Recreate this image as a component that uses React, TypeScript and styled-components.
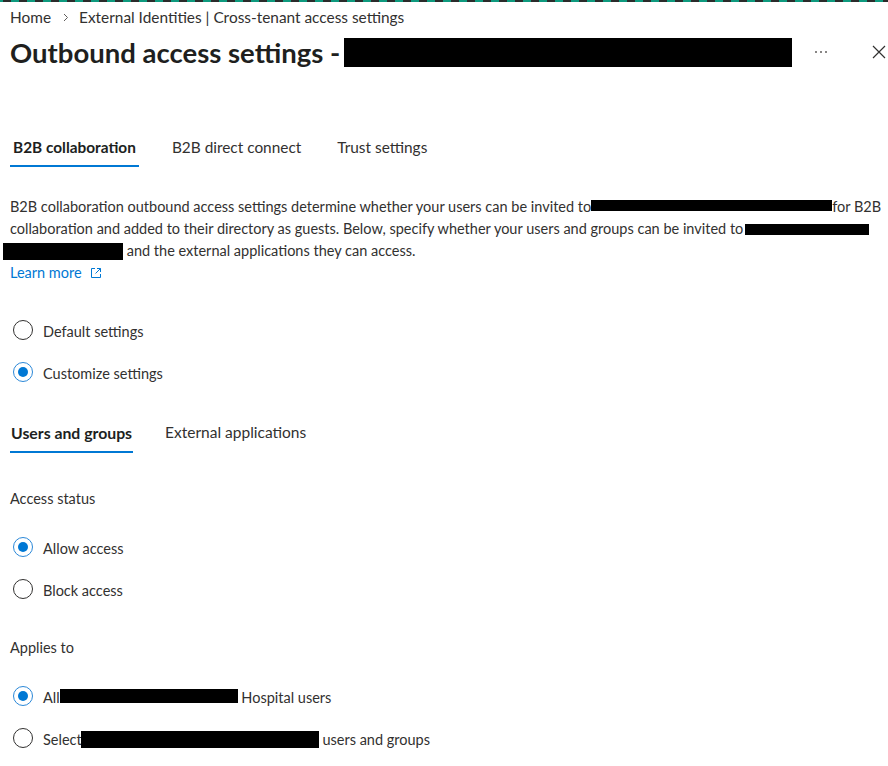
import React from "react";
import styled, { createGlobalStyle } from "styled-components";

const Global = createGlobalStyle`
  html, body { margin: 0; padding: 0; background: #ffffff; }
  body {
    font-family: Lato, "Open Sans", sans-serif;
    color: #323130;
    -webkit-font-smoothing: antialiased;
  }
`;

const Stripe = styled.div`
  height: 2px;
  background: repeating-linear-gradient(
    90deg,
    #0e9a7e 0 3px,
    #2b2b2b 3px 11px,
    #0e9a7e 11px 16px
  );
`;

const Page = styled.div`
  padding: 0 2px 0 10px;
`;

const Breadcrumb = styled.nav`
  display: flex;
  align-items: center;
  height: 20px;
  margin-top: 5px;
  font-size: 15.4px;
  color: #323130;
`;

const Crumb = styled.span`
  white-space: nowrap;
`;

const CrumbSep = styled.span`
  display: inline-flex;
  margin: 0 10px 0 12px;
  color: #605e5c;
`;

const HeaderRow = styled.div`
  display: flex;
  align-items: center;
  height: 32px;
  margin-top: 9px;
`;

const Title = styled.h1`
  margin: 0;
  font-size: 27.5px;
  font-weight: 700;
  color: #201f1e;
  white-space: nowrap;
  display: flex;
  align-items: center;
  gap: 4px;
`;

const Redact = styled.span<{ $w: number; $h: number; $dy?: number; $dx?: number }>`
  display: inline-block;
  width: ${(p) => p.$w}px;
  height: ${(p) => p.$h}px;
  background: #000;
  vertical-align: middle;
  margin-left: ${(p) => p.$dx ?? 0}px;
  transform: translateY(${(p) => p.$dy ?? 0}px);
`;

const Spacer = styled.div`
  flex: 1;
`;

const IconBtn = styled.button<{ $gap?: number }>`
  border: 0;
  background: none;
  padding: 0;
  margin-left: ${(p) => p.$gap ?? 0}px;
  display: inline-flex;
  align-items: center;
  justify-content: center;
  color: #605e5c;
  cursor: pointer;
`;

const TabBar = styled.div<{ $top: number; $gap: number }>`
  display: flex;
  gap: ${(p) => p.$gap}px;
  margin-top: ${(p) => p.$top}px;
`;

const Tab = styled.div<{ $active?: boolean; $pad: number; $lift: number; $size: number }>`
  height: 36px;
  display: flex;
  align-items: center;
  padding: 0 ${(p) => p.$pad}px ${(p) => p.$lift}px;
  font-size: ${(p) => p.$size}px;
  font-weight: ${(p) => (p.$active ? 700 : 400)};
  color: ${(p) => (p.$active ? "#201f1e" : "#323130")};
  box-sizing: border-box;
  border-bottom: 2px solid ${(p) => (p.$active ? "#0078d4" : "transparent")};
  white-space: nowrap;
`;

const Description = styled.p`
  margin: 29px 0 0;
  font-size: 14.5px;
  line-height: 22px;
  color: #323130;
  white-space: nowrap;
`;

const Link = styled.a`
  color: #0078d4;
  text-decoration: none;
  display: inline-flex;
  align-items: center;
  gap: 8px;
`;

const RadioGroup = styled.div<{ $top: number }>`
  display: flex;
  flex-direction: column;
  gap: 22px;
  margin-top: ${(p) => p.$top}px;
  padding-left: 3px;
`;

const RadioRow = styled.label`
  display: flex;
  align-items: center;
  gap: 10px;
  height: 20px;
  font-size: 14.5px;
  color: #323130;
  white-space: nowrap;
`;

const RadioLabel = styled.span`
  display: flex;
  align-items: center;
  padding-top: 3px;
`;

const Circle = styled.span<{ $checked?: boolean }>`
  width: 20px;
  height: 20px;
  box-sizing: border-box;
  border-radius: 50%;
  border: ${(p) => (p.$checked ? "1.5px solid #2b88d8" : "1px solid #323130")};
  display: inline-flex;
  align-items: center;
  justify-content: center;
  flex: none;
  &::after {
    content: "";
    width: 10px;
    height: 10px;
    border-radius: 50%;
    background: ${(p) => (p.$checked ? "#0078d4" : "transparent")};
  }
`;

const FieldLabel = styled.div<{ $top: number }>`
  margin-top: ${(p) => p.$top}px;
  font-size: 14.5px;
  line-height: 20px;
  color: #323130;
`;

const Radio = ({ checked, children }: { checked?: boolean; children: React.ReactNode }) => (
  <RadioRow>
    <Circle $checked={checked} />
    <RadioLabel>{children}</RadioLabel>
  </RadioRow>
);

export default function App() {
  return (
    <>
      <Global />
      <Stripe />
      <Page>
        <Breadcrumb>
          <Crumb>Home</Crumb>
          <CrumbSep>
            <svg width="6" height="9" viewBox="0 0 6 9">
              <path d="M1 1l3.5 3.5L1 8" fill="none" stroke="#605e5c" strokeWidth="1" />
            </svg>
          </CrumbSep>
          <Crumb>External Identities | Cross-tenant access settings</Crumb>
        </Breadcrumb>

        <HeaderRow>
          <Title>
            Outbound access settings -
            <Redact $w={448} $h={29} />
          </Title>
          <Spacer />
          <IconBtn aria-label="More">
            <svg width="14" height="4" viewBox="0 0 14 4">
              <circle cx="2" cy="2" r="1" fill="#605e5c" />
              <circle cx="7" cy="2" r="1" fill="#605e5c" />
              <circle cx="12" cy="2" r="1" fill="#605e5c" />
            </svg>
          </IconBtn>
          <IconBtn aria-label="Close" $gap={44}>
            <svg width="14" height="14" viewBox="0 0 14 14">
              <path d="M1 1l12 12M13 1L1 13" stroke="#323130" strokeWidth="1.2" />
            </svg>
          </IconBtn>
        </HeaderRow>

        <TabBar $top={63} $gap={30}>
          <Tab $active $pad={3} $lift={2} $size={15.4}>B2B collaboration</Tab>
          <Tab $pad={3} $lift={2} $size={15.4}>B2B direct connect</Tab>
          <Tab $pad={3} $lift={2} $size={15.4}>Trust settings</Tab>
        </TabBar>

        <Description>
          B2B collaboration outbound access settings determine whether your users can be invited to
          <Redact $w={241} $h={11} $dy={-3} />
          for B2B
          <br />
          collaboration and added to their directory as guests. Below, specify whether your users and groups can be invited to
          <Redact $w={124} $h={11} $dy={-1} $dx={2} />
          <br />
          <Redact $w={120} $h={17} $dx={-7} $dy={-1} /> and the external applications they can access.
          <br />
          <Link href="#">
            Learn more
            <svg width="12" height="12" viewBox="0 0 12 12">
              <path d="M5 1.5H1.5v9h9V7" fill="none" stroke="#0078d4" strokeWidth="1" />
              <path d="M7 1.5h3.5V5M10.5 1.5L5.5 6.5" fill="none" stroke="#0078d4" strokeWidth="1" />
            </svg>
          </Link>
        </Description>

        <RadioGroup $top={36}>
          <Radio>Default settings</Radio>
          <Radio checked>Customize settings</Radio>
        </RadioGroup>

        <TabBar $top={35} $gap={30}>
          <Tab $active $pad={1} $lift={4} $size={15.8}>Users and groups</Tab>
          <Tab $pad={2} $lift={4} $size={15.5}>External applications</Tab>
        </TabBar>

        <FieldLabel $top={36}>Access status</FieldLabel>

        <RadioGroup $top={28}>
          <Radio checked>Allow access</Radio>
          <Radio>Block access</Radio>
        </RadioGroup>

        <FieldLabel $top={39}>Applies to</FieldLabel>

        <RadioGroup $top={28}>
          <Radio checked>
            All
            <Redact $w={178} $h={14} $dy={-2} />
            &nbsp;Hospital users
          </Radio>
          <Radio>
            Select
            <Redact $w={238} $h={17} $dx={-1} />
            &nbsp;users and groups
          </Radio>
        </RadioGroup>
      </Page>
    </>
  );
}
